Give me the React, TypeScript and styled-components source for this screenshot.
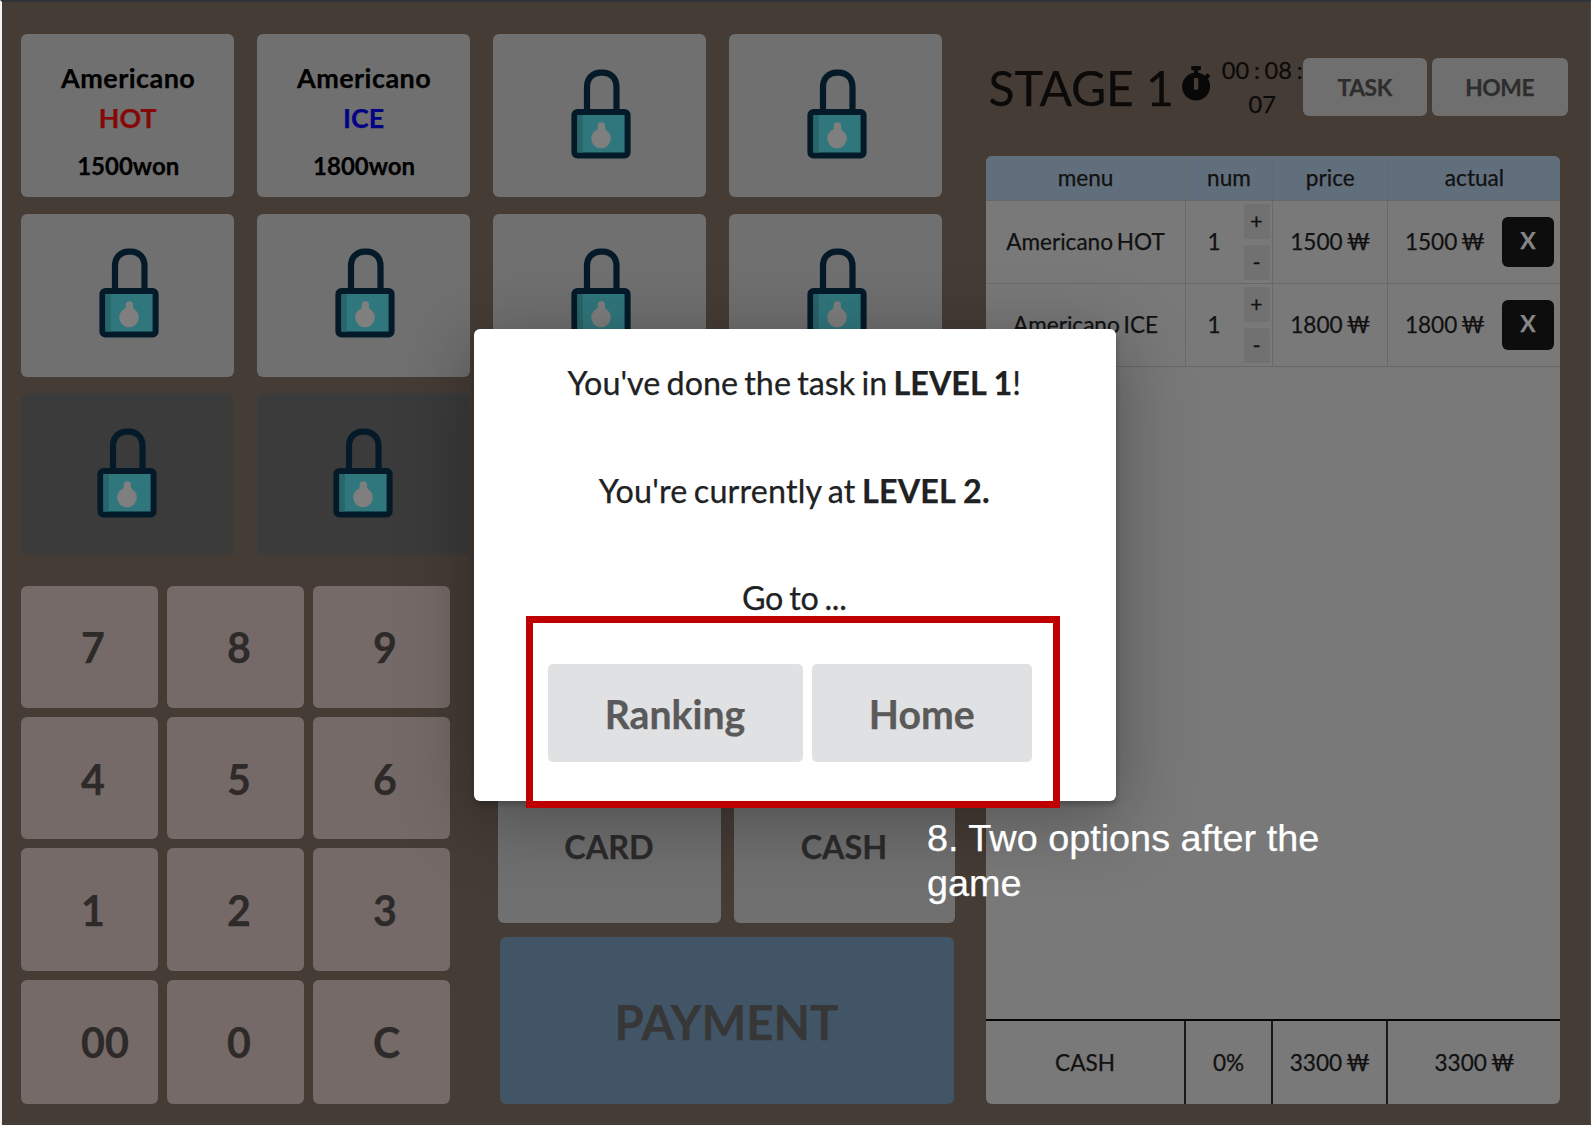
import React from "react";
import styled, { createGlobalStyle } from "styled-components";
import { FaStopwatch } from "react-icons/fa";

const GlobalStyle = createGlobalStyle`
  *, *::before, *::after { box-sizing: border-box; }
  html, body { margin: 0; padding: 0; background: #463c36; }
  body { font-family: Lato, "Noto Sans", sans-serif; overflow: hidden; }
  button { font-family: inherit; border: 0; padding: 0; margin: 0; }
`;

const Page = styled.main`
  position: relative;
  width: 1591px;
  height: 1125px;
  display: flex;
  align-items: flex-start;
  padding: 32px 0 0 19px;
  background: #463c36;
  border-left: 2px solid #f4f4f4;
  border-top: 2px solid #303337;
  border-right: 1px solid #514a45;
  overflow: hidden;
  -webkit-text-stroke: 0.25px currentColor;
`;

const Board = styled.section`
  width: 964.5px;
  flex: none;
  display: flex;
  flex-direction: column;
`;

const MenuGrid = styled.div`
  display: grid;
  grid-template-columns: repeat(4, 213.4px);
  grid-template-rows: 163.4px 163.5px 162px;
  column-gap: 22.5px;
  row-gap: 16.2px;
`;

const MenuCard = styled.button<{ $empty?: boolean }>`
  display: flex;
  flex-direction: column;
  align-items: center;
  justify-content: ${(p) => (p.$empty !== undefined ? "center" : "flex-start")};
  width: ${(p) => (p.$empty ? "212px" : "100%")};
  height: 100%;
  border-radius: 6px;
  background: ${(p) => (p.$empty ? "#3b3b3b" : "#707070")};
  color: #000;
  font-weight: 700;
  padding: ${(p) =>
    p.$empty === undefined ? "24px 0 0" : p.$empty ? "0 0 2px 0" : "0 0 4px 3px"};
`;

const DrinkName = styled.span`
  font-size: 27px;
  line-height: 40px;
  letter-spacing: 0.45px;
  padding-left: 1px;
`;

const DrinkKind = styled.span<{ $color: string }>`
  font-size: 26.8px;
  line-height: 40px;
  color: ${(p) => p.$color};
`;

const DrinkPrice = styled.span`
  margin: 10px 0 0 1px;
  font-size: 24px;
  line-height: 36px;
`;

const LowerArea = styled.div`
  display: flex;
  margin-top: 30.3px;
  height: 518.3px;
`;

const Keypad = styled.div`
  width: 429px;
  display: grid;
  grid-template-columns: repeat(3, 136.7px);
  grid-template-rows: 122.3px 122.3px 122.3px 124px;
  gap: 9.1px 9.3px;
`;

const Key = styled.button`
  display: flex;
  align-items: center;
  padding: 1px 0 0 60px;
  border-radius: 6px;
  background: #756a68;
  color: #2d2a29;
  font-size: 41.2px;
  font-weight: 700;
`;

const PayArea = styled.div`
  margin-left: 47.5px;
  width: 457px;
  display: flex;
  flex-direction: column;
`;

const PayMethods = styled.div`
  display: grid;
  grid-template-columns: 223px 221px;
  column-gap: 13px;
  height: 337px;
  align-items: end;
`;

const MethodButton = styled.button`
  height: 154px;
  padding-top: 2px;
  border-radius: 6px;
  background: #707070;
  color: #2b2b2b;
  font-size: 32.4px;
  font-weight: 700;
`;

const PaymentButton = styled.button`
  margin: 14px 1px 0 2px;
  padding-top: 2px;
  height: 167.3px;
  border-radius: 6px;
  background: #425566;
  color: #373737;
  font-size: 47.4px;
  font-weight: 700;
`;

const Side = styled.section`
  width: 590px;
  flex: none;
`;

const StageBar = styled.header`
  display: flex;
  align-items: flex-start;
  height: 121.7px;
  color: #0b0a09;
`;

const StageTitle = styled.h1`
  margin: 24px 0 0 3px;
  width: 192.5px;
  flex: none;
  font-size: 48.2px;
  line-height: 58px;
  font-weight: 400;
  letter-spacing: -0.15px;
  white-space: nowrap;
`;

const WatchIcon = styled(FaStopwatch)`
  flex: none;
  margin: 32px 0 0 -0.5px;
  width: 30.2px;
  height: 34.5px;
  color: #080808;
`;

const Timer = styled.div`
  width: 81px;
  flex: none;
  margin: 18.5px 0 0 11px;
  font-size: 23.6px;
  line-height: 34px;
  text-align: center;
`;

const TimerLine = styled.div`
  white-space: nowrap;
  word-spacing: -1.3px;
`;

const NavButton = styled.button<{ $width: number }>`
  flex: none;
  width: ${(p) => p.$width}px;
  height: 58px;
  margin: 24px 5px 0 0;
  padding-bottom: 1px;
  border-radius: 6px;
  background: #6f6f6f;
  color: #2d2d2d;
  font-size: 22.8px;
  font-weight: 700;
  letter-spacing: -0.4px;
`;

const Receipt = styled.div`
  width: 574.5px;
  height: 948.3px;
  display: flex;
  flex-direction: column;
  border-radius: 6px;
  overflow: hidden;
  background: #797979;
  color: #111;
  font-size: 22.6px;
  word-spacing: -2px;
`;

const ReceiptRow = styled.div<{ $kind: "head" | "item" | "total" }>`
  display: grid;
  grid-template-columns: 200px 87px 115.5px 172px;
  height: ${(p) => (p.$kind === "head" ? 45 : p.$kind === "item" ? 83.2 : 85)}px;
  background: ${(p) => (p.$kind === "head" ? "#616e7c" : "transparent")};
  border-bottom: ${(p) => (p.$kind === "total" ? "0" : "1px solid #686868")};
  border-top: ${(p) => (p.$kind === "total" ? "2px solid #050505" : "0")};
  margin-top: ${(p) => (p.$kind === "total" ? "auto" : "0")};

  & > * {
    border-right: ${(p) => (p.$kind === "total" ? "2px solid #191919" : "1px solid #696969")};
  }
  & > *:last-child { border-right: 0; }
`;

const Cell = styled.div`
  display: flex;
  align-items: center;
  justify-content: center;
  padding: 0 0 0.4px 1px;
  white-space: nowrap;
`;

const CountCell = styled(Cell)`
  justify-content: space-between;
  padding: 0 2px 0.4px 22px;
`;

const Steppers = styled.div`
  display: flex;
  flex-direction: column;
  gap: 6px;
`;

const Step = styled.button`
  width: 26px;
  height: 35px;
  padding-bottom: 1px;
  border-radius: 3px;
  background: #717171;
  color: #111;
  font-size: 22px;
`;

const ActualCell = styled(Cell)`
  justify-content: flex-end;
  gap: 17px;
  padding: 0 6px 0 0;
`;

const RemoveButton = styled.button`
  width: 52px;
  height: 50px;
  border-radius: 6px;
  background: #0d0d0d;
  color: #868686;
  font-size: 23px;
  font-weight: 700;
  padding-bottom: 3px;
`;

const Dialog = styled.div`
  position: absolute;
  left: 471.5px;
  top: 327px;
  width: 642.5px;
  height: 472px;
  padding-top: 34px;
  border-radius: 6px;
  background: #fff;
  color: #202122;
  font-size: 32.3px;
  text-align: center;
  box-shadow: 1px 4px 5px rgba(0, 0, 0, 0.2), 0 16px 75px 4px rgba(0, 0, 0, 0.3);
`;

const Message = styled.p<{ $tracking?: number }>`
  margin: 0 0 67.6px;
  padding-right: 1px;
  line-height: 40px;
  word-spacing: -2px;
  letter-spacing: ${(p) => p.$tracking ?? 0}px;
  white-space: nowrap;

  b { word-spacing: 0; }
`;

const DialogActions = styled.div`
  display: flex;
  justify-content: flex-start;
  gap: 9.3px;
  margin: -21.8px 0 0 74px;
`;

const ActionButton = styled.button<{ $width: number }>`
  width: ${(p) => p.$width}px;
  height: 98px;
  padding-top: 2px;
  border-radius: 5px;
  background: #e0e1e2;
  color: #5a5a5a;
  font-size: 39.2px;
  font-weight: 700;
`;

const Highlight = styled.div`
  position: absolute;
  left: 523.5px;
  top: 614px;
  width: 534.5px;
  height: 192px;
  border: 7.7px solid #c00000;
`;

const Caption = styled.div`
  position: absolute;
  left: 925px;
  top: 813.5px;
  width: 420px;
  color: #fff;
  font-family: "Liberation Sans", Arial, sans-serif;
  font-size: 37.8px;
  line-height: 45.3px;
`;

const Padlock = () => (
  <svg width="60" height="90" viewBox="0 0 60 90" aria-hidden="true">
    <path d="M16 42V18C16 9 22 3.600 29.500 3.600h2.500c7.500 0 13.500 5.400 13.500 14.400V42" fill="none" stroke="#041a29" strokeWidth="6.2" />
    <rect x="3.400" y="43" width="53.200" height="43.500" rx="3" fill="#30777d" stroke="#041a29" strokeWidth="6" />
    <rect x="6.400" y="46" width="5.400" height="37.500" fill="#28666b" />
    <circle cx="30" cy="69.500" r="9.800" fill="#7f7f7f" />
    <path d="M26.700 57a3.700 3.700 0 0 1 7.400 0v2.500q0.500 2 3.500 4.500h-15q3.500-2.500 4.100-4.500z" fill="#7f7f7f" />
  </svg>
);

const drinks = [
  { name: "Americano", kind: "HOT", color: "#850806", price: 1500 },
  { name: "Americano", kind: "ICE", color: "#020285", price: 1800 },
];

// Slots past the unlocked drinks; the last row is not available at all.
const lockedSlots = Array.from({ length: 10 }, (_, i) => i >= 6);

const keys = ["7", "8", "9", "4", "5", "6", "1", "2", "3", "00", "0", "C"];

export default function App() {
  return (
    <>
      <GlobalStyle />
      <Page>
        <Board>
          <MenuGrid>
            {drinks.map((d) => (
              <MenuCard key={d.kind}>
                <DrinkName>{d.name}</DrinkName>
                <DrinkKind $color={d.color}>{d.kind}</DrinkKind>
                <DrinkPrice>{d.price}won</DrinkPrice>
              </MenuCard>
            ))}
            {lockedSlots.map((empty, i) => (
              <MenuCard key={i} $empty={empty}>
                <Padlock />
              </MenuCard>
            ))}
          </MenuGrid>
          <LowerArea>
            <Keypad>
              {keys.map((k) => (
                <Key key={k}>{k}</Key>
              ))}
            </Keypad>
            <PayArea>
              <PayMethods>
                <MethodButton>CARD</MethodButton>
                <MethodButton>CASH</MethodButton>
              </PayMethods>
              <PaymentButton>PAYMENT</PaymentButton>
            </PayArea>
          </LowerArea>
        </Board>
        <Side>
          <StageBar>
            <StageTitle>STAGE 1</StageTitle>
            <WatchIcon />
            <Timer>
              <TimerLine>00 : 08 :</TimerLine>
              <TimerLine>07</TimerLine>
            </Timer>
            <NavButton $width={124}>TASK</NavButton>
            <NavButton $width={136}>HOME</NavButton>
          </StageBar>
          <Receipt>
            <ReceiptRow $kind="head">
              <Cell>menu</Cell>
              <Cell>num</Cell>
              <Cell>price</Cell>
              <Cell>actual</Cell>
            </ReceiptRow>
            {drinks.map((d) => (
              <ReceiptRow $kind="item" key={d.kind}>
                <Cell>
                  {d.name} {d.kind}
                </Cell>
                <CountCell>
                  1
                  <Steppers>
                    <Step>+</Step>
                    <Step>-</Step>
                  </Steppers>
                </CountCell>
                <Cell>{d.price} ₩</Cell>
                <ActualCell>
                  {d.price} ₩<RemoveButton>X</RemoveButton>
                </ActualCell>
              </ReceiptRow>
            ))}
            <ReceiptRow $kind="total">
              <Cell>CASH</Cell>
              <Cell>0%</Cell>
              <Cell>3300 ₩</Cell>
              <Cell>3300 ₩</Cell>
            </ReceiptRow>
          </Receipt>
        </Side>
        <Dialog role="dialog">
          <Message>
            You've done the task in <b>LEVEL 1</b>!
          </Message>
          <Message $tracking={0.16}>
            You're currently at <b>LEVEL 2.</b>
          </Message>
          <Message $tracking={-0.25}>Go to ...</Message>
          <DialogActions>
            <ActionButton $width={255}>Ranking</ActionButton>
            <ActionButton $width={220}>Home</ActionButton>
          </DialogActions>
        </Dialog>
        <Highlight />
        <Caption>
          8. Two options after the
          <br />
          game
        </Caption>
      </Page>
    </>
  );
}
